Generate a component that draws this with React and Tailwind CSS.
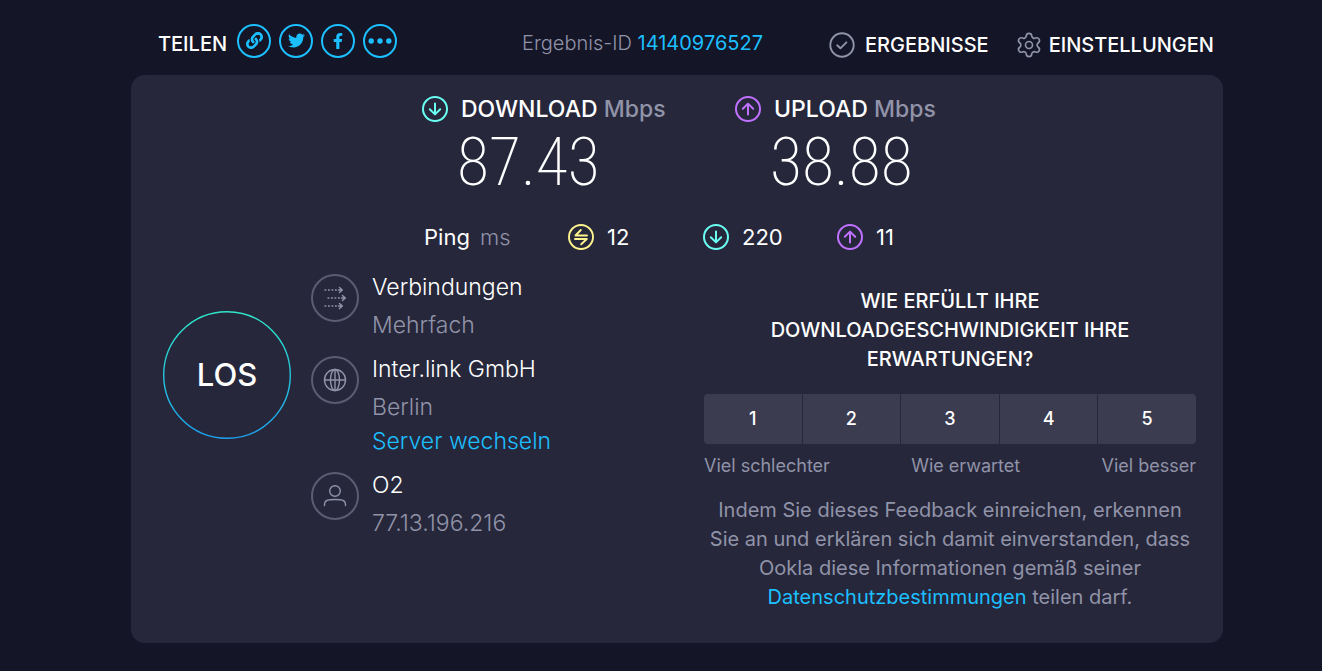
import React from "react";
import { Settings } from "lucide-react";
import { FaFacebookF, FaLink, FaTwitter } from "react-icons/fa";

const svgBase = {
  fill: "none",
  stroke: "currentColor",
  strokeLinecap: "round",
  strokeLinejoin: "round",
  "aria-hidden": true,
};

function ArrowCircle({ up = false, className }) {
  return (
    <svg {...svgBase} viewBox="0 0 28 28" strokeWidth="2" className={`size-7 shrink-0 ${className}`}>
      <circle cx="14" cy="14" r="12" />
      {up ? <path d="M14 19.5V9M8.8 13.8L14 8.6l5.200 5.200" /> : <path d="M14 8.500V19M8.800 14.200L14 19.400l5.200-5.200" />}
    </svg>
  );
}

function PingIcon() {
  return (
    <svg {...svgBase} viewBox="0 0 28 28" strokeWidth="1.9" className="size-7 shrink-0 text-[#fff38e]">
      <circle cx="14" cy="14" r="12" />
      <path d="M20 12.500H8.500L13.800 7" />
      <path d="M8 16H19.800L14.200 21.300" />
    </svg>
  );
}

function ConnectionsIcon() {
  return (
    <svg {...svgBase} viewBox="0 0 24 24" strokeWidth="1.3" className="size-6">
      {[
        [1.500, 4],
        [4.500, 12],
        [1.500, 20],
      ].map(([x, y]) => (
        <g key={y} transform={`translate(${x} ${y})`}>
          <path d="M0 0H14" strokeDasharray="1.800 1.700" strokeLinecap="butt" />
          <path d="M14 0H17.500M15 -2.500L17.800 0L15 2.500" strokeWidth="1.500" />
        </g>
      ))}
    </svg>
  );
}

function GlobeIcon() {
  return (
    <svg {...svgBase} viewBox="0 0 24 24" strokeWidth="1.400" className="size-6">
      <circle cx="12" cy="12" r="10.500" />
      <ellipse cx="12" cy="12" rx="4.500" ry="10.500" />
      <path d="M1.500 12H22.500M12 1.500V22.500" />
    </svg>
  );
}

function UserIcon() {
  return (
    <svg {...svgBase} viewBox="0 0 24 24" strokeWidth="1.400" className="size-6">
      <circle cx="12" cy="7" r="5.300" />
      <path d="M1.500 21.500V20.500C1.500 17.200 4 16 7 15.800Q12 15.200 17 15.800C20 16 22.500 17.200 22.500 20.500V21.500" />
    </svg>
  );
}

function DotsIcon() {
  return (
    <svg viewBox="0 0 24 8" fill="currentColor" aria-hidden className="w-6">
      <circle cx="3.200" cy="4" r="2.700" />
      <circle cx="12" cy="4" r="2.700" />
      <circle cx="20.800" cy="4" r="2.700" />
    </svg>
  );
}

const shares = [
  { label: "Link kopieren", icon: <FaLink className="size-[17px]" /> },
  { label: "Twitter", icon: <FaTwitter className="size-[17px]" /> },
  { label: "Facebook", icon: <FaFacebookF className="size-4" /> },
  { label: "Mehr", icon: <DotsIcon /> },
];

function Header() {
  return (
    <header className="flex h-[75px] items-center pt-[10px] pr-[9px] pl-[27px]">
      <div className="mt-[2px] flex items-center gap-[10px]">
        <span className="text-[20px] font-medium">TEILEN</span>
        <div className="mb-[6px] flex gap-2">
          {shares.map((s) => (
            <button
              key={s.label}
              type="button"
              aria-label={s.label}
              className="flex size-[34px] items-center justify-center rounded-full border-2 border-[#1cbfff] text-[#1cbfff]"
            >
              {s.icon}
            </button>
          ))}
        </div>
      </div>
      <p className="ml-auto text-[20px] font-light text-[#9193a8]">
        Ergebnis-ID{" "}
        <a href="#ergebnis" className="font-normal text-[#1cbfff]">
          14140976527
        </a>
      </p>
      <nav className="mt-1 ml-[66px] flex gap-7 text-[20px] font-medium">
        <a href="#ergebnisse" className="flex items-center gap-[10px]">
          <svg {...svgBase} viewBox="0 0 26 26" strokeWidth="1.900" className="size-[26px] text-[#9193a8]">
            <circle cx="13" cy="13" r="11.700" />
            <path d="M8.200 13.300L11.400 16.300L17.400 10.300" />
          </svg>
          ERGEBNISSE
        </a>
        <a href="#einstellungen" className="flex items-center gap-2">
          <Settings size={28} strokeWidth={1.4} className="-mx-[2px] text-[#9193a8]" aria-hidden />
          EINSTELLUNGEN
        </a>
      </nav>
    </header>
  );
}

function Speed({ label, value, up }) {
  return (
    <div className="flex w-[313px] gap-3">
      <ArrowCircle up={up} className={up ? "text-[#bf71ff]" : "text-[#6afff3]"} />
      <div>
        <h2 className="text-[23px] leading-7 font-medium">
          {label} <span className="text-[#9193a8]">Mbps</span>
        </h2>
        <p className="-ml-1 h-20 font-['Roboto_Condensed','Roboto',sans-serif] text-[66px] leading-[80px] font-extralight">
          {value}
        </p>
      </div>
    </div>
  );
}

function Detail({ icon, title, text, children }) {
  return (
    <li className="flex gap-[13px]">
      <span className="flex size-12 shrink-0 items-center justify-center rounded-full border-2 border-[#5c5d73] text-[#9193a8]">
        {icon}
      </span>
      <div className="text-[23px] leading-[26px] font-light">
        <p>{title}</p>
        <p className="mt-3 text-[#9193a8]">{text}</p>
        {children}
      </div>
    </li>
  );
}

function Survey() {
  return (
    <section className="ml-auto w-[492px] pt-9 text-center">
      <h3 className="px-12 text-[20px] leading-[29px] font-medium">
        WIE ERFÜLLT IHRE DOWNLOADGESCHWINDIGKEIT IHRE ERWARTUNGEN?
      </h3>
      <div className="mt-5 grid grid-cols-5 gap-px overflow-hidden rounded">
        {[1, 2, 3, 4, 5].map((n) => (
          <button key={n} type="button" className="h-[50px] bg-[#3c3c51] pb-[2px] text-[18px] font-medium">
            {n}
          </button>
        ))}
      </div>
      <div className="mt-[10px] flex justify-between text-[18px] leading-6 text-[#9193a8]">
        <span>Viel schlechter</span>
        <span>Wie erwartet</span>
        <span>Viel besser</span>
      </div>
      <p className="mt-[18px] text-[20px] leading-[29px] text-[#9193a8]">
        Indem Sie dieses Feedback einreichen, erkennen Sie an und erklären sich damit einverstanden, dass Ookla diese
        Informationen gemäß seiner{" "}
        <a href="#datenschutz" className="text-[#1cbfff]">
          Datenschutzbestimmungen
        </a>{" "}
        teilen darf.
      </p>
    </section>
  );
}

export default function App() {
  return (
    <div className="min-h-screen bg-[#141526] pr-[99px] pb-7 pl-[131px] font-['Inter',sans-serif] text-white">
      <Header />
      <main className="rounded-[14px] bg-[#26273b] pt-5 pr-[27px] pb-[31px] pl-8">
        <div className="flex pl-[258px]">
          <Speed label="DOWNLOAD" value="87.43" />
          <Speed label="UPLOAD" value="38.88" up />
        </div>
        <div className="mt-5 flex pl-[261px] text-[22px] leading-7">
          <p className="w-[143px]">
            Ping <span className="ml-1 font-light text-[#9193a8]">ms</span>
          </p>
          <p className="flex w-[135px] gap-3">
            <PingIcon />
            12
          </p>
          <p className="flex w-[134px] gap-3">
            <ArrowCircle className="text-[#6afff3]" />
            220
          </p>
          <p className="flex gap-3">
            <ArrowCircle up className="text-[#bf71ff]" />
            11
          </p>
        </div>
        <div className="flex items-start">
          <button type="button" className="mt-[60px] grid size-32 shrink-0 place-items-center text-[31px] font-medium">
            <svg viewBox="0 0 129 129" fill="none" aria-hidden className="col-start-1 row-start-1 size-full">
              <defs>
                <linearGradient id="ring" x1="0" y1="0" x2="0" y2="1">
                  <stop offset="0" stopColor="#2ee6c8" />
                  <stop offset="1" stopColor="#1ca3f0" />
                </linearGradient>
              </defs>
              <circle cx="64.500" cy="64.500" r="63.800" stroke="url(#ring)" strokeWidth="1.400" />
            </svg>
            <span className="col-start-1 row-start-1">LOS</span>
          </button>
          <ul className="mt-[23px] ml-5 flex flex-col gap-[18px]">
            <Detail icon={<ConnectionsIcon />} title="Verbindungen" text="Mehrfach" />
            <Detail icon={<GlobeIcon />} title="Inter.link GmbH" text="Berlin">
              <a href="#server" className="mt-2 block text-[#1cbfff]">
                Server wechseln
              </a>
            </Detail>
            <Detail icon={<UserIcon />} title="O2" text="77.13.196.216" />
          </ul>
          <Survey />
        </div>
      </main>
    </div>
  );
}
